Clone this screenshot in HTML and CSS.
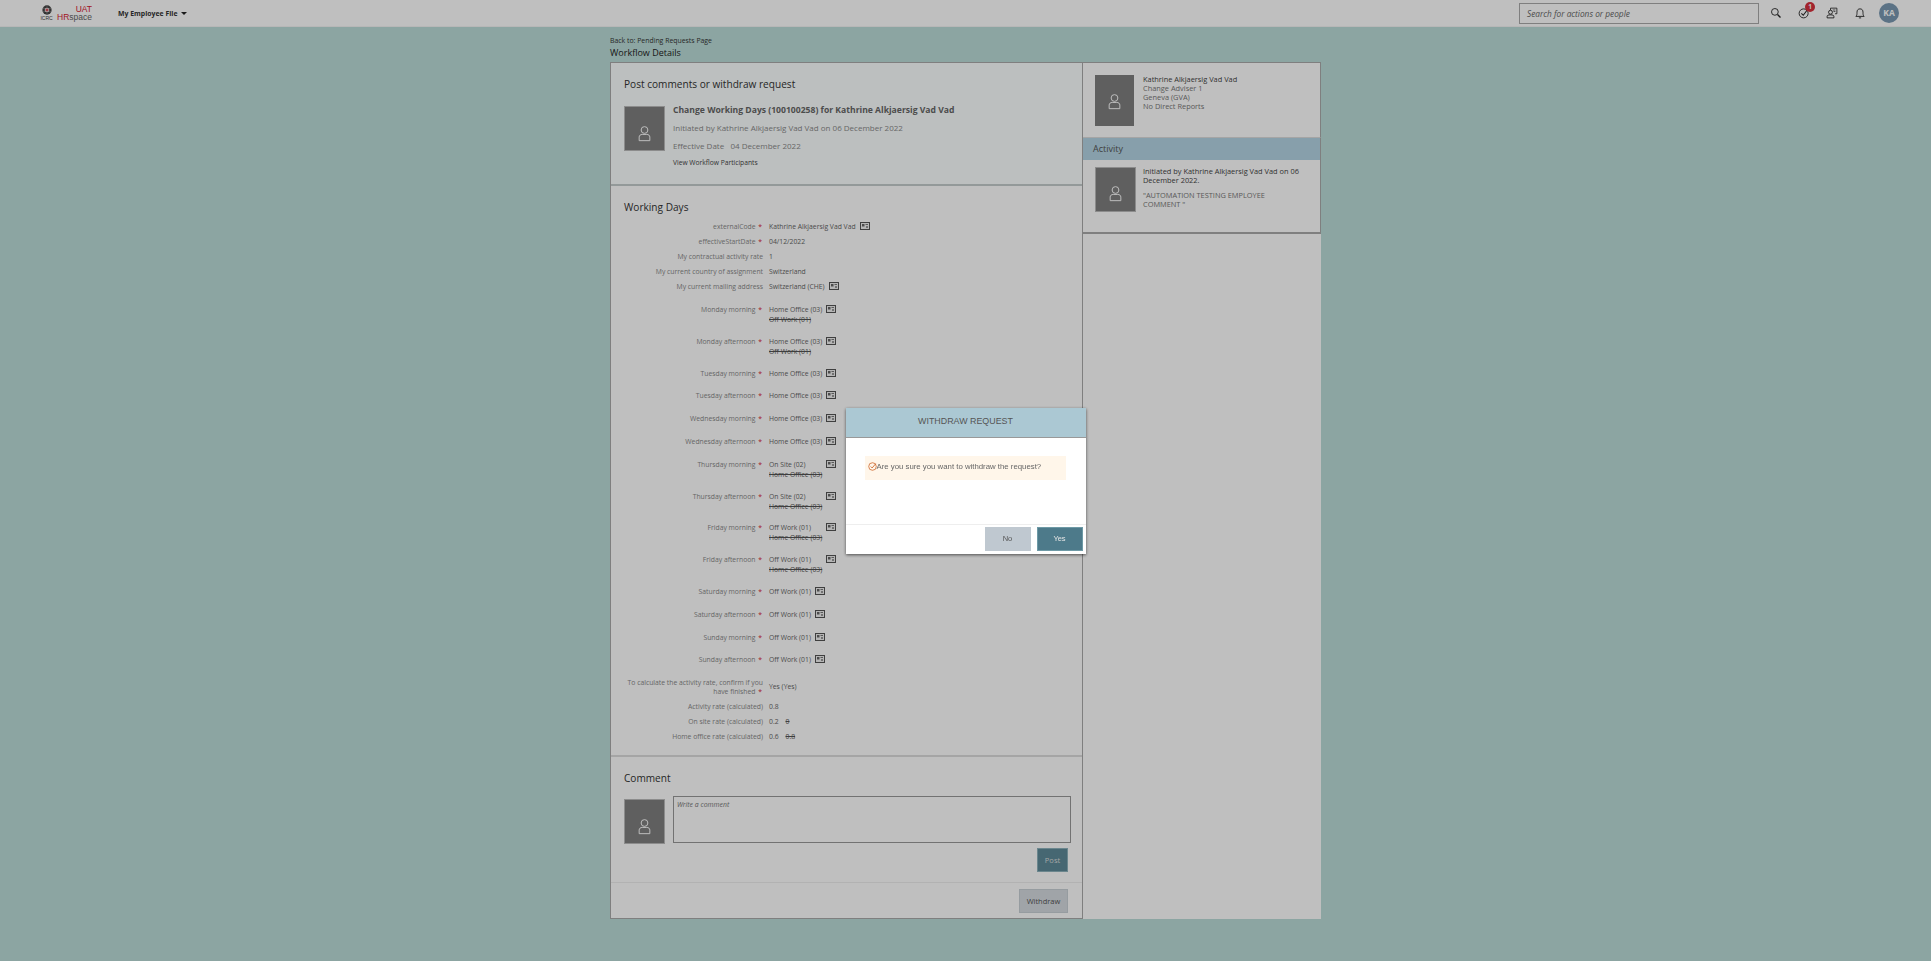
FILE: index.html
```html
<!DOCTYPE html>
<html>

<head>
    <meta charset="utf-8">
    <title>Workflow Details</title>
    <link rel="stylesheet" href="styles.css">
</head>

<body>
    <svg class="defs" width="0" height="0">
        <symbol id="person" viewBox="0 0 14 18">
            <circle cx="7" cy="4.5" r="3.8" fill="none" stroke="currentColor" stroke-width="1.1" />
            <path d="M1 16.5V12.5C1 10.5 2.5 9.5 4.5 9.5H9.5C11.5 9.5 13 10.5 13 12.5V16.5Z" fill="none"
                stroke="currentColor" stroke-width="1.1" />
        </symbol>
        <symbol id="card" viewBox="0 0 10 8">
            <rect x="0.5" y="0.5" width="9" height="7" fill="#f2f2f2" stroke="#555" />
            <rect x="2" y="2" width="2.5" height="2.5" fill="#666" />
            <rect x="5.5" y="2" width="2.5" height="1" fill="#777" />
            <rect x="6" y="4" width="2" height="2" fill="#999" />
        </symbol>
    </svg>

    <header class="topbar">
        <div class="logo">
            <div class="logo-icrc">
                <svg class="logo-globe" viewBox="0 0 14 14">
                    <circle cx="7" cy="7" r="6.5" fill="#444" />
                    <path d="M1 5H13M1 9H13M7 1V13" stroke="#aaa" stroke-width="0.6" />
                    <circle cx="7" cy="7" r="3.2" fill="#eee" />
                    <path d="M7 4.8V9.2M4.8 7H9.2" stroke="#c8202f" stroke-width="1.5" />
                </svg>
                <span>ICRC</span>
            </div>
            <div class="logo-hr">
                <span class="logo-uat">UAT</span>
                <span class="logo-name"><b>HR</b>space</span>
            </div>
        </div>
        <div class="module">My Employee File <span class="caret"></span></div>
        <div class="search">Search for actions or people</div>
        <svg class="tool tool-first" viewBox="0 0 16 16">
            <circle cx="6.5" cy="6.5" r="4.5" fill="none" stroke="#222" stroke-width="1.2" />
            <path d="M10 10L14 14" stroke="#222" stroke-width="1.7" />
        </svg>
        <div class="tool-badged">
            <svg class="tool" viewBox="0 0 16 16">
                <circle cx="7.5" cy="8.5" r="6" fill="none" stroke="#222" stroke-width="1.2" />
                <path d="M4.5 8.5L7 11L13 3" fill="none" stroke="#222" stroke-width="1.4" />
            </svg>
            <span class="badge">1</span>
        </div>
        <svg class="tool" viewBox="0 0 16 16">
            <path d="M6 4V1.5H14.5V9H12" fill="none" stroke="#222" stroke-width="1.1" />
            <circle cx="6" cy="7" r="2.6" fill="none" stroke="#222" stroke-width="1.2" />
            <path d="M1.5 14.5V12.5C1.5 11 3 10.5 6 10.5S10.5 11 10.5 12.5V14.5Z" fill="none" stroke="#222"
                stroke-width="1.2" />
            <path d="M9 4H12.5M10 6H12.5" stroke="#222" stroke-width="0.9" />
        </svg>
        <svg class="tool" viewBox="0 0 16 16">
            <path d="M2.5 12.5C4 11 4 9.5 4 7C4 4 5.5 2.5 8 2.5S12 4 12 7C12 9.5 12 11 13.5 12.5Z" fill="none"
                stroke="#222" stroke-width="1.2" />
            <path d="M6.5 14.5H9.5" stroke="#222" stroke-width="1.2" />
        </svg>
        <div class="me">KA</div>
    </header>

    <div class="page">
        <a class="back">Back to: Pending Requests Page</a>
        <div class="page-title">Workflow Details</div>

        <div class="layout">
            <main class="main">
                <section class="summary">
                    <h2>Post comments or withdraw request</h2>
                    <div class="summary-body">
                        <div class="avatar avatar-main"><svg><use href="#person" /></svg></div>
                        <div>
                            <div class="summary-title">Change Working Days (100100258) for Kathrine Alkjaersig Vad Vad</div>
                            <div class="summary-line">Initiated by Kathrine Alkjaersig Vad Vad on 06 December 2022</div>
                            <div class="summary-line">Effective Date &nbsp;&nbsp;04 December 2022</div>
                            <div class="participants">View Workflow Participants</div>
                        </div>
                    </div>
                </section>

                <section class="details">
                    <h2>Working Days</h2>
                    <div class="row"><div class="label">externalCode <i>*</i></div><div class="value">Kathrine Alkjaersig Vad Vad <svg class="card"><use href="#card" /></svg></div></div>
                    <div class="row"><div class="label">effectiveStartDate <i>*</i></div><div class="value">04/12/2022</div></div>
                    <div class="row"><div class="label">My contractual activity rate</div><div class="value">1</div></div>
                    <div class="row"><div class="label">My current country of assignment</div><div class="value">Switzerland</div></div>
                    <div class="row row-last"><div class="label">My current mailing address</div><div class="value">Switzerland (CHE) <svg class="card"><use href="#card" /></svg></div></div>

                    <div class="row changed"><div class="label">Monday morning <i>*</i></div><div class="value"><div>Home Office (03)<s>Off Work (01)</s></div><svg class="card"><use href="#card" /></svg></div></div>
                    <div class="row changed"><div class="label">Monday afternoon <i>*</i></div><div class="value"><div>Home Office (03)<s>Off Work (01)</s></div><svg class="card"><use href="#card" /></svg></div></div>
                    <div class="row day"><div class="label">Tuesday morning <i>*</i></div><div class="value">Home Office (03) <svg class="card"><use href="#card" /></svg></div></div>
                    <div class="row day"><div class="label">Tuesday afternoon <i>*</i></div><div class="value">Home Office (03) <svg class="card"><use href="#card" /></svg></div></div>
                    <div class="row day"><div class="label">Wednesday morning <i>*</i></div><div class="value">Home Office (03) <svg class="card"><use href="#card" /></svg></div></div>
                    <div class="row day"><div class="label">Wednesday afternoon <i>*</i></div><div class="value">Home Office (03) <svg class="card"><use href="#card" /></svg></div></div>
                    <div class="row changed"><div class="label">Thursday morning <i>*</i></div><div class="value"><div>On Site (02)<s>Home Office (03)</s></div><svg class="card"><use href="#card" /></svg></div></div>
                    <div class="row changed"><div class="label">Thursday afternoon <i>*</i></div><div class="value"><div>On Site (02)<s>Home Office (03)</s></div><svg class="card"><use href="#card" /></svg></div></div>
                    <div class="row changed"><div class="label">Friday morning <i>*</i></div><div class="value"><div>Off Work (01)<s>Home Office (03)</s></div><svg class="card"><use href="#card" /></svg></div></div>
                    <div class="row changed"><div class="label">Friday afternoon <i>*</i></div><div class="value"><div>Off Work (01)<s>Home Office (03)</s></div><svg class="card"><use href="#card" /></svg></div></div>
                    <div class="row day"><div class="label">Saturday morning <i>*</i></div><div class="value">Off Work (01) <svg class="card"><use href="#card" /></svg></div></div>
                    <div class="row day"><div class="label">Saturday afternoon <i>*</i></div><div class="value">Off Work (01) <svg class="card"><use href="#card" /></svg></div></div>
                    <div class="row day"><div class="label">Sunday morning <i>*</i></div><div class="value">Off Work (01) <svg class="card"><use href="#card" /></svg></div></div>
                    <div class="row day"><div class="label">Sunday afternoon <i>*</i></div><div class="value">Off Work (01) <svg class="card"><use href="#card" /></svg></div></div>

                    <div class="row row-wrap"><div class="label">To calculate the activity rate, confirm if you have finished <i>*</i></div><div class="value">Yes (Yes)</div></div>
                    <div class="row"><div class="label">Activity rate (calculated)</div><div class="value">0.8</div></div>
                    <div class="row"><div class="label">On site rate (calculated)</div><div class="value">0.2 <s class="old">0</s></div></div>
                    <div class="row"><div class="label">Home office rate (calculated)</div><div class="value">0.6 <s class="old">0.8</s></div></div>
                </section>

                <section class="comment">
                    <h2>Comment</h2>
                    <div class="comment-body">
                        <div class="avatar avatar-main"><svg><use href="#person" /></svg></div>
                        <div class="comment-box">Write a comment</div>
                    </div>
                    <div class="comment-actions"><button class="btn btn-post">Post</button></div>
                </section>

                <footer class="main-actions"><button class="btn btn-withdraw">Withdraw</button></footer>
            </main>

            <aside class="side">
                <div class="person">
                    <div class="avatar avatar-tall"><svg><use href="#person" /></svg></div>
                    <div class="person-info">
                        <div class="person-name">Kathrine Alkjaersig Vad Vad</div>
                        <div>Change Adviser 1</div>
                        <div>Geneva (GVA)</div>
                        <div>No Direct Reports</div>
                    </div>
                </div>
                <div class="activity-head">Activity</div>
                <div class="activity">
                    <div class="avatar avatar-side"><svg><use href="#person" /></svg></div>
                    <div class="activity-text">
                        <div class="person-name">Initiated by Kathrine Alkjaersig Vad Vad on 06 December 2022.</div>
                        <p>"AUTOMATION TESTING EMPLOYEE COMMENT "</p>
                    </div>
                </div>
            </aside>
        </div>
    </div>

    <div class="scrim">
        <div class="dialog">
            <div class="dialog-head">WITHDRAW REQUEST</div>
            <div class="dialog-body">
                <div class="notice">
                    <svg class="notice-icon" viewBox="0 0 10 10">
                        <circle cx="5" cy="5" r="4.2" fill="none" stroke="#c8591a" stroke-width="0.8" />
                        <path d="M3 5L4.6 6.6L8.5 2" fill="none" stroke="#c8591a" stroke-width="0.9" />
                    </svg><span>Are you sure you want to withdraw the request?</span>
                </div>
            </div>
            <div class="dialog-foot">
                <button class="btn btn-no">No</button>
                <button class="btn btn-yes">Yes</button>
            </div>
        </div>
    </div>
</body>

</html>
```

FILE: styles.css
```css
/* page */
html,
body {
    height: 100%;
    margin: 0;
    overflow: hidden;
}

body {
    background-color: #bbddd8;
    color: #333;
    font-family: "Open Sans", "Liberation Sans", sans-serif;
    font-size: 6.8px;
}

.defs {
    position: absolute;
}

h2 {
    margin: 0;
    font-size: 10.1px;
    font-weight: normal;
    color: #333;
}

/* top bar */
.topbar {
    display: flex;
    align-items: center;
    height: 26px;
    padding-left: 39px;
    background-color: #fff;
    border-bottom: 1px solid #f4f4f4;
}

.logo {
    display: flex;
    width: 79px;
    align-items: center;
    font-family: "Liberation Sans", sans-serif;
}

.logo-icrc {
    display: flex;
    flex-direction: column;
    align-items: center;
    width: 15px;
    font-size: 5px;
    color: #444;
}

.logo-globe {
    width: 10px;
    height: 10px;
}

.logo-hr {
    display: flex;
    flex-direction: column;
    align-items: flex-end;
    width: 33px;
    margin-left: 5px;
    line-height: 8px;
}

.logo-uat {
    font-size: 8.5px;
    color: #d8202f;
}

.logo-name {
    font-size: 8.5px;
    color: #666;
}

.logo-name b {
    font-weight: normal;
    color: #d8202f;
}

.module {
    display: flex;
    align-items: center;
    gap: 4px;
    font-size: 6.9px;
    font-weight: bold;
    color: #333;
}

.caret {
    border-top: 3px solid #222;
    border-left: 3px solid transparent;
    border-right: 3px solid transparent;
}

.search {
    width: 231px;
    height: 19px;
    margin-left: auto;
    padding-left: 7px;
    border: 1px solid #aaa;
    font-size: 8.3px;
    font-style: italic;
    line-height: 19px;
    color: #666;
}

.tool {
    display: block;
    width: 12px;
    height: 12px;
    margin-left: 16px;
}

.tool-first {
    margin-left: 11px;
}

.tool-badged {
    position: relative;
}

.badge {
    position: absolute;
    top: -5px;
    right: -5px;
    width: 10px;
    height: 10px;
    border-radius: 50%;
    background-color: #d8303c;
    color: #fff;
    font-size: 6.5px;
    font-weight: bold;
    line-height: 10px;
    text-align: center;
}

.me {
    width: 20px;
    height: 20px;
    margin: 0 32px 0 13px;
    border-radius: 50%;
    background-color: #7a99b2;
    color: #fff;
    font-size: 8.5px;
    font-weight: bold;
    line-height: 20px;
    text-align: center;
}

/* content */
.page {
    width: 711px;
    margin: 0 auto;
    padding-top: 9px;
}

.back {
    display: block;
    font-size: 6.9px;
    line-height: 9px;
    color: #333;
}

.page-title {
    margin: 2px 0 3px;
    font-size: 9px;
    line-height: 12px;
    color: #222;
}

.layout {
    display: flex;
    height: 856px;
    border-top: 1px solid #aaa;
}

.main {
    width: 471px;
    background-color: #fff;
    border-left: 1px solid #aaa;
    border-right: 1px solid #aaa;
    border-bottom: 1px solid #aaa;
}

.summary {
    height: 123px;
    box-sizing: border-box;
    padding: 14px 11px 0 13px;
    background-color: #fbffff;
    border-bottom: 2px solid #c4cccc;
}

.summary-body {
    display: flex;
    gap: 8px;
    margin-top: 15px;
}

.avatar {
    display: flex;
    flex: none;
    align-items: flex-end;
    justify-content: center;
    box-sizing: border-box;
    background-color: #7f7f7f;
    color: #fff;
}

.avatar svg {
    width: 13px;
    height: 16px;
}

.avatar-main {
    width: 41px;
    height: 45px;
    padding-bottom: 8px;
    border: 1px solid #bbb;
}

.avatar-tall {
    width: 39px;
    height: 51px;
    padding-bottom: 16px;
    align-items: flex-end;
}

.avatar-side {
    width: 41px;
    height: 45px;
    padding-bottom: 9px;
    border: 1px solid #bbb;
}

.summary-title {
    margin-top: -1px;
    font-size: 8.6px;
    font-weight: bold;
    line-height: 10px;
    color: #666;
}

.summary-line {
    margin-top: 7px;
    font-size: 8px;
    line-height: 11px;
    color: #8a8a8a;
}

.participants {
    margin-top: 7px;
    font-size: 6.7px;
    line-height: 10px;
    color: #444;
}

.details {
    height: 571px;
    box-sizing: border-box;
    padding: 14px 11px 0 13px;
    border-bottom: 2px solid #ddd;
}

.details h2 {
    margin-bottom: 5px;
}

.row {
    display: grid;
    grid-template-columns: 139px 1fr;
    column-gap: 6px;
    height: 15px;
    line-height: 15px;
}

.row-last {
    margin-bottom: 8px;
}

.row.changed {
    height: 31.8px;
}

.row.day {
    height: 22.8px;
}

.row-wrap {
    height: 25px;
    margin-top: -1px;
    align-items: center;
    line-height: 9px;
}

.label {
    text-align: right;
    color: #888;
}

.label i {
    margin-left: 1px;
    margin-right: 1px;
    font-style: normal;
    color: #d8202f;
}

.value {
    display: flex;
    align-items: flex-start;
    gap: 4px;
    color: #666;
}

.value s {
    display: block;
    margin-top: -5px;
    color: #555;
}

.value s.old {
    display: inline;
    margin: 0 0 0 3px;
}

.card {
    flex: none;
    width: 10px;
    height: 8px;
    margin-top: 3px;
}

.comment {
    height: 126px;
    box-sizing: border-box;
    padding: 14px 11px 0 13px;
    border-bottom: 1px solid #eee;
}

.comment-body {
    display: flex;
    gap: 8px;
    margin-top: 14px;
}

.comment-box {
    flex: 1;
    height: 47px;
    margin-top: -3px;
    box-sizing: border-box;
    padding: 3px;
    border: 1px solid #999;
    font-size: 6.9px;
    font-style: italic;
    color: #777;
}

.comment-actions {
    display: flex;
    justify-content: flex-end;
    padding-right: 3px;
    margin-top: 4px;
}

.main-actions {
    display: flex;
    justify-content: flex-end;
    padding: 6px 14px 0 0;
}

.btn {
    display: block;
    padding: 0;
    font-family: inherit;
    font-size: 7.5px;
}

.btn-post {
    width: 31px;
    height: 24px;
    border: 1px solid #8fb3bd;
    background-color: #5e8a99;
    color: #ddd;
}

.btn-withdraw {
    width: 49px;
    height: 24px;
    border: 1px solid #c8d0d6;
    background-color: #d6dbe0;
    color: #555;
}

/* right column */
.side {
    width: 238px;
    background-color: #fff;
}

.person {
    display: flex;
    gap: 9px;
    height: 75px;
    box-sizing: border-box;
    padding: 12px 0 0 12px;
    border-right: 1px solid #aaa;
    border-bottom: 1px solid #ddd;
}

.person-info,
.activity-text {
    font-size: 7.4px;
    line-height: 9px;
    color: #777;
}

.activity-text {
    width: 158px;
}

.person-name {
    color: #444;
}

.activity-head {
    height: 22px;
    padding-left: 10px;
    background-color: #b4d5e4;
    border-right: 1px solid #aaa;
    font-size: 9px;
    line-height: 22px;
    color: #555;
}

.activity {
    display: flex;
    gap: 7px;
    height: 74px;
    box-sizing: border-box;
    padding: 7px 0 0 12px;
    border-right: 1px solid #aaa;
    border-bottom: 2px solid #aaa;
}

.activity-text p {
    margin: 6px 0 0;
}

/* withdraw dialog */
.scrim {
    position: fixed;
    inset: 0;
    display: flex;
    align-items: center;
    justify-content: center;
    background-color: rgba(0, 0, 0, 0.25);
}

.dialog {
    width: 240px;
    height: 146px;
    display: flex;
    flex-direction: column;
    background-color: #fff;
    font-family: "Liberation Sans", sans-serif;
    box-shadow: 0 1px 3px rgba(0, 0, 0, 0.6);
}

.dialog-head {
    height: 29px;
    background-color: #abc8d3;
    border-bottom: 1px solid #999;
    font-size: 8.9px;
    line-height: 26px;
    text-align: center;
    color: #555;
}

.dialog-body {
    flex: 1;
    padding: 18px 20px 0 19px;
}

.notice {
    display: flex;
    align-items: center;
    height: 21px;
    padding: 0 0 3px 3px;
    background-color: #fff6ea;
    font-size: 7.8px;
    color: #666;
}

.notice-icon {
    width: 9px;
    height: 9px;
}

.dialog-foot {
    display: flex;
    justify-content: flex-end;
    gap: 6px;
    height: 30px;
    box-sizing: border-box;
    padding: 2px 3px 0 0;
    border-top: 1px solid #eee;
}

.btn-no,
.btn-yes {
    width: 46px;
    height: 24px;
}

.btn-no {
    border: 0;
    background-color: #bfc8d0;
    color: #555;
}

.btn-yes {
    border: 1px solid #6e9aa6;
    background-color: #4d7a8a;
    color: #e6e6e6;
}
```
